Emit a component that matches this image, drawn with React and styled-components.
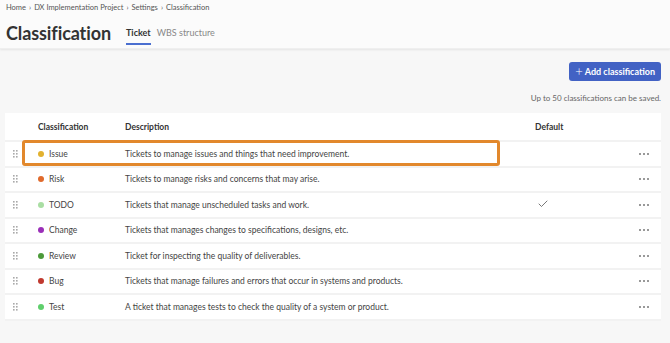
import styled, { createGlobalStyle } from 'styled-components';
import { Check } from 'lucide-react';

const GlobalStyle = createGlobalStyle`
	body {
		margin: 0;
		background: #f7f7f7;
		font-family: Lato, "Noto Sans", sans-serif;
		color: #333;
	}
`;

const Header = styled.header`
	background: #fbfbfb;
	height: 48px;
	padding: 0 6px;
	box-shadow: 0 1px 2px rgba(0, 0, 0, 0.08);
	border-bottom: 1px solid #efefef;
`;

const Crumbs = styled.div`
	display: flex;
	align-items: center;
	gap: 3px;
	height: 14px;
	font-size: 7.5px;
	color: #555;
`;

const TitleRow = styled.div`
	display: flex;
	align-items: flex-end;
	gap: 15px;
	margin-top: 6px;
`;

const Title = styled.h1`
	margin: 0;
	font-size: 18px;
	font-weight: 700;
	color: #333;
	line-height: 26px;
	letter-spacing: -0.1px;
`;

const Tabs = styled.nav`
	display: flex;
	gap: 6px;
	margin-bottom: 1px;
`;

const Tab = styled.span`
	font-size: 9px;
	font-weight: ${({ active }) => (active ? 700 : 400)};
	color: ${({ active }) => (active ? '#333' : '#888')};
	padding-bottom: 5px;
	border-bottom: 2px solid ${({ active }) => (active ? '#4a6fd0' : 'transparent')};
`;

const Main = styled.main`
	padding: 13px 9px 0 5px;
`;

const Toolbar = styled.div`
	display: flex;
	flex-direction: column;
	align-items: flex-end;
`;

const AddButton = styled.button`
	display: flex;
	align-items: center;
	gap: 2px;
	height: 19px;
	padding: 0 6px;
	border: none;
	border-radius: 3px;
	background: #4262c4;
	color: #fff;
	font-family: inherit;
	font-size: 9px;
	font-weight: 700;
	span {
		font-size: 13px;
		font-weight: 300;
		line-height: 1;
	}
`;

const Note = styled.p`
	margin: 12px 0 0;
	font-size: 8px;
	color: #666;
`;

const Card = styled.section`
	position: relative;
	margin-top: 10px;
	background: #fff;
`;

const Row = styled.div`
	display: grid;
	grid-template-columns: 33px 87px 410px 95px 1fr;
	align-items: center;
	height: ${({ head }) => (head ? '27px' : '23.5px')};
	border-bottom: 2px solid #f2f2f2;
	font-size: 8.5px;
	font-weight: ${({ head }) => (head ? 700 : 400)};
	color: ${({ head }) => (head ? '#333' : '#444')};
`;

const Name = styled.div`
	display: flex;
	align-items: center;
	gap: 5px;
`;

const Dot = styled.i`
	width: 6px;
	height: 6px;
	border-radius: 50%;
	background: ${({ color }) => color};
`;

const GripCell = styled.div`
	display: flex;
	padding-left: 8px;
`;

const MoreCell = styled.div`
	display: flex;
	justify-content: center;
	padding-right: 4px;
`;

const Highlight = styled.div`
	position: absolute;
	left: 17px;
	top: 27px;
	width: 472px;
	height: 20px;
	border: 3px solid #e2882c;
	border-radius: 3px;
	pointer-events: none;
`;

const Grip = () => (
	<svg width="5" height="8" viewBox="0 0 5 8" fill="#aaa">
		{[0, 3, 6].map((y) => (
			<g key={y}>
				<rect x="0" y={y} width="1.6" height="1.6" />
				<rect x="3" y={y} width="1.6" height="1.6" />
			</g>
		))}
	</svg>
);

const More = () => (
	<svg width="10" height="2" viewBox="0 0 10 2" fill="#999">
		<rect x="0" y="0" width="2" height="2" />
		<rect x="4" y="0" width="2" height="2" />
		<rect x="8" y="0" width="2" height="2" />
	</svg>
);

const rows = [
	{ name: 'Issue', color: '#e2b12f', desc: 'Tickets to manage issues and things that need improvement.' },
	{ name: 'Risk', color: '#e06a2c', desc: 'Tickets to manage risks and concerns that may arise.' },
	{ name: 'TODO', color: '#a9dea3', desc: 'Tickets that manage unscheduled tasks and work.', isDefault: true },
	{ name: 'Change', color: '#9a2fb8', desc: 'Tickets that manages changes to specifications, designs, etc.' },
	{ name: 'Review', color: '#4c9a3a', desc: 'Ticket for inspecting the quality of deliverables.' },
	{ name: 'Bug', color: '#c0392f', desc: 'Tickets that manage failures and errors that occur in systems and products.' },
	{ name: 'Test', color: '#5fcf6c', desc: 'A ticket that manages tests to check the quality of a system or product.' }
];

export default function App() {
	return (
		<>
			<GlobalStyle />
			<Header>
				<Crumbs>
					<span>Home</span>›<span>DX Implementation Project</span>›<span>Settings</span>›
					<span>Classification</span>
				</Crumbs>
				<TitleRow>
					<Title>Classification</Title>
					<Tabs>
						<Tab active>Ticket</Tab>
						<Tab>WBS structure</Tab>
					</Tabs>
				</TitleRow>
			</Header>
			<Main>
				<Toolbar>
					<AddButton>
						<span>+</span>Add classification
					</AddButton>
					<Note>Up to 50 classifications can be saved.</Note>
				</Toolbar>
				<Card>
					<Row head>
						<div />
						<div>Classification</div>
						<div>Description</div>
						<div>Default</div>
						<div />
					</Row>
					{rows.map((r) => (
						<Row key={r.name}>
							<GripCell>
								<Grip />
							</GripCell>
							<Name>
								<Dot color={r.color} />
								{r.name}
							</Name>
							<div>{r.desc}</div>
							<div>{r.isDefault && <Check size={12} strokeWidth={1.6} color="#555" style={{ marginLeft: 2 }} />}</div>
							<MoreCell>
								<More />
							</MoreCell>
						</Row>
					))}
					<Highlight />
				</Card>
			</Main>
		</>
	);
}
